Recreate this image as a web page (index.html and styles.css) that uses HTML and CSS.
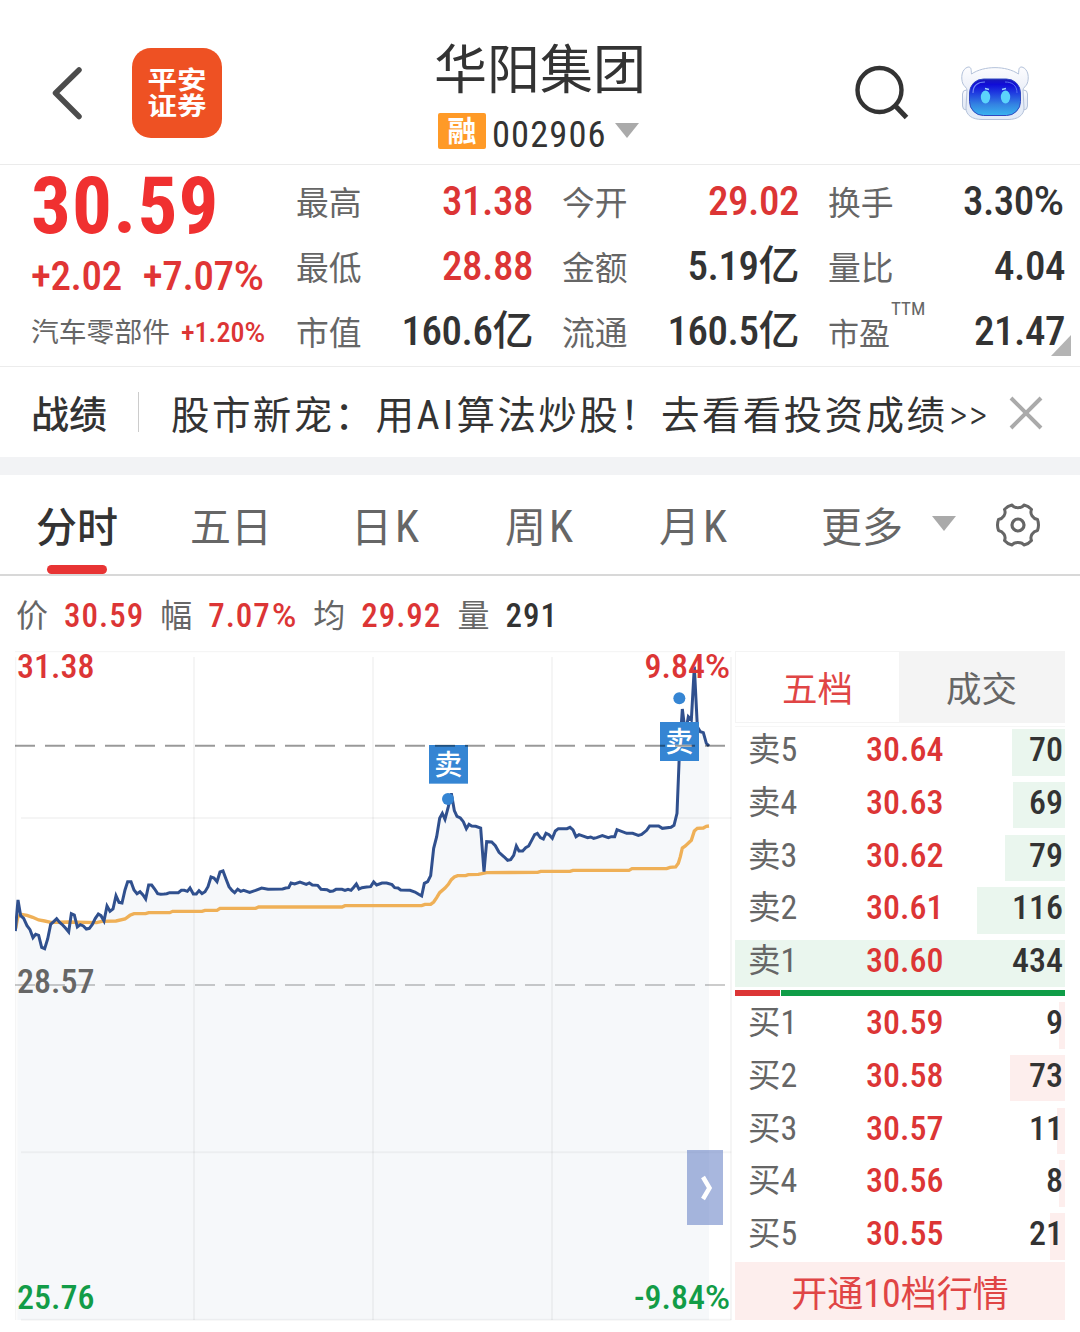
FILE: index.html
```
<!DOCTYPE html>
<html lang="zh-CN">
<head>
    <meta charset="UTF-8">
    <meta name="viewport" content="width=device-width, initial-scale=1.0">
    <title>华阳集团 002906</title>
    <link rel="stylesheet" href="styles.css">
</head>
<body>
    <header class="header">
        <svg class="back" width="36" height="60" viewBox="0 0 36 60">
            <path d="M31 7 L7.500 30 L31 53.500" fill="none" stroke="#4c4c4c" stroke-width="5.5" stroke-linecap="round" stroke-linejoin="round"/>
        </svg>
        <div class="logo"><span>平安</span><span>证券</span></div>
        <div class="title">
            <h1>华阳集团</h1>
            <div class="code">
                <span class="badge">融</span>
                <span class="code-num">002906</span>
                <i class="arrow"></i>
            </div>
        </div>
        <svg class="search" width="60" height="60" viewBox="0 0 60 60">
            <circle cx="29.500" cy="30" r="22" fill="none" stroke="#333" stroke-width="4.4"/>
            <path d="M45 45.5 L56.500 57.5" stroke="#333" stroke-width="5"/>
        </svg>
        <svg class="robot" width="70" height="58" viewBox="0 0 70 58">
            <defs>
                <linearGradient id="face" x1="0" y1="0" x2="0" y2="1">
                    <stop offset="0" stop-color="#1b1bb8"/>
                    <stop offset="0.15" stop-color="#100cd8"/>
                    <stop offset="0.4" stop-color="#2040e0"/>
                    <stop offset="0.7" stop-color="#3484e2"/>
                    <stop offset="1" stop-color="#38b4f0"/>
                </linearGradient>
                <linearGradient id="shell" x1="0" y1="0" x2="0" y2="1">
                    <stop offset="0" stop-color="#fdfdff"/>
                    <stop offset="0.5" stop-color="#e9edf7"/>
                    <stop offset="1" stop-color="#e4ecf8"/>
                </linearGradient>
            </defs>
            <g fill="url(#shell)" stroke="#b4c2da" stroke-width="1">
                <rect x="2.500" y="25" width="9" height="20" rx="4"/>
                <rect x="58.500" y="25" width="9" height="20" rx="4"/>
                <path d="M8 2 C1.500 4 .500 13 3 19 C4 21 7 23 7 25 L6 43 C6 50 12 54.500 22 54.500 L48 54.500 C58 54.500 64 50 64 43 L63 25 C63 23 66 21 67 19 C69.500 13 68.500 4 62 2 C58.500 2 59 4 58.500 9 C46 .500 24 .500 11.500 9 C11 4 11.500 2 8 2 Z"/>
            </g>
            <rect x="9.500" y="14" width="51" height="36.500" rx="14" fill="url(#face)" stroke="#3048c0" stroke-width="1"/>
            <path d="M13 28 C13 20 18 17 25 17" fill="none" stroke="#6f88f4" stroke-width="1.200"/>
            <path d="M57 28 C57 20 52 17 45 17" fill="none" stroke="#5570f0" stroke-width="1"/>
            <ellipse cx="25.500" cy="32" rx="4.700" ry="6.500" fill="#5cd4fb"/>
            <ellipse cx="45.500" cy="32" rx="4.700" ry="6.500" fill="#5cd4fb"/>
            <path d="M25 23.500 l4 1 M46 23.500 l-4 1" stroke="#9fd4fd" stroke-width="1.300"/>
        </svg>
    </header>

    <section class="quote">
        <div class="price-box">
            <div class="price">30.59</div>
            <div class="change"><span>+2.02</span><span>+7.07<i class="pct">%</i></span></div>
            <div class="sector"><span class="sector-name">汽车零部件</span><span class="sector-rate">+1.20<i class="pct">%</i></span></div>
        </div>
        <div class="stats">
            <div class="stat"><label>最高</label><b class="red">31.38</b></div>
            <div class="stat"><label>今开</label><b class="red">29.02</b></div>
            <div class="stat"><label>换手</label><b>3.30<i class="pct">%</i></b></div>
            <div class="stat"><label>最低</label><b class="red">28.88</b></div>
            <div class="stat"><label>金额</label><b>5.19亿</b></div>
            <div class="stat"><label>量比</label><b>4.04</b></div>
            <div class="stat"><label>市值</label><b>160.6亿</b></div>
            <div class="stat"><label>流通</label><b>160.5亿</b></div>
            <div class="stat"><label class="pe">市盈<sup>TTM</sup></label><b>21.47</b></div>
        </div>
        <i class="corner"></i>
    </section>

    <section class="notice">
        <strong>战绩</strong>
        <p>股市新宠：用<span class="latin">AI</span>算法炒股！去看看投资成绩<span class="more">&gt;&gt;</span></p>
        <svg class="close" width="34" height="34" viewBox="0 0 34 34">
            <path d="M2 2 L32 32 M32 2 L2 32" stroke="#aaa" stroke-width="4"/>
        </svg>
    </section>

    <nav class="tabs">
        <a class="tab active">分时</a>
        <a class="tab">五日</a>
        <a class="tab">日<span>K</span></a>
        <a class="tab">周<span>K</span></a>
        <a class="tab">月<span>K</span></a>
        <a class="tab tab-more">更多</a>
        <i class="arrow"></i>
        <svg class="gear" width="46" height="46" viewBox="0 0 46 46">
            <path d="M17 3 C19 6.500 27 6.500 29 3 Q33.500 4 36.500 7.500 C34.500 12 38 16.500 42.500 17.500 Q44.500 23 42.500 28.500 C38 29.500 34.500 34 36.500 38.500 Q33.500 42 29 43 C27 39.500 19 39.500 17 43 Q12.500 42 9.500 38.500 C11.500 34 8 29.500 3.500 28.500 Q1.500 23 3.500 17.500 C8 16.500 11.500 12 9.500 7.500 Q12.500 4 17 3 Z" fill="none" stroke="#666" stroke-width="3" stroke-linejoin="round"/>
            <circle cx="23" cy="23" r="6" fill="none" stroke="#666" stroke-width="3.200"/>
        </svg>
    </nav>

    <div class="info">
        <label>价</label><b class="red">30.59</b>
        <label>幅</label><b class="red">7.07<i class="pct">%</i></b>
        <label>均</label><b class="red">29.92</b>
        <label>量</label><b>291</b>
    </div>

    <main class="main">
        <!-- 分时图 -->
        <div class="chart">
            <svg width="717" height="670" viewBox="45 18 2151 2010">
                <polygon fill="#f6f8fa" points="52,2025 52,790 62,812 71,820 81,842 90,854 99,878 107,868 116,871 125,907 134,911 143,882 152,838 170,821 188,840 206,861 214,806 223,810 232,846 241,839 259,852 268,850 286,820 295,807 312,828 321,783 330,799 339,792 348,752 357,772 366,774 375,735 383,710 393,710 402,735 411,746 420,740 437,762 446,720 455,720 473,746 509,743 535,743 570,729 580,747 606,746 624,725 633,696 651,710 660,681 669,678 687,725 704,743 749,742 785,729 848,732 873,714 900,711 953,721 963,733 1060,728 1069,717 1112,725 1121,711 1160,714 1202,735 1230,736 1265,753 1273,715 1283,710 1292,692 1301,610 1319,520 1335,523 1354,445 1363,497 1381,519 1399,551 1407,538 1442,549 1452,680 1460,590 1475,591 1497,622 1523,646 1532,644 1549,603 1568,618 1586,603 1612,565 1630,582 1657,580 1675,551 1710,547 1728,575 1763,578 1834,575 1851,554 1915,571 1949,543 2013,547 2022,541 2031,505 2038,330 2047,192 2056,265 2074,225 2083,65 2092,245 2110,263 2127,303 2127,2025"/>
                <g stroke="#000" stroke-opacity="0.04" stroke-width="6">
                    <path d="M45 20 H2194" stroke-width="4"/>
                    <path d="M63 519 H2194 M63 1522 H2194 M63 2024 H2194"/>
                    <path d="M47 36 V2025" stroke-width="4"/>
                    <path d="M582 36 V2025 M1119 36 V2025 M1656 36 V2025 M2193 36 V2025"/>
                </g>
                <polyline class="avg" points="47,850 53,818 62,808 81,811 98,817 116,825 134,828 152,832 206,831 290,833 305,829 348,828 375,822 390,811 402,806 437,806 446,803 509,803 518,799 606,799 615,796 651,796 660,790 767,790 776,786 1026,786 1035,782 1265,782 1275,778 1292,778 1301,771 1310,758 1319,743 1335,729 1345,718 1354,704 1363,696 1373,692 1397,692 1405,689 1435,688 1460,683 1613,682 1622,679 1710,679 1719,676 1887,676 1896,671 2000,671 2010,667 2027,666 2035,655 2041,635 2047,609 2056,603 2074,586 2083,558 2092,550 2110,549 2119,544 2127,543"/>
                <polyline class="line" points="46,858 54,765 62,812 71,820 81,842 90,854 99,878 107,868 116,871 125,907 134,911 143,882 152,838 161,830 170,821 179,832 188,840 197,850 206,861 214,806 223,810 232,846 241,839 250,843 259,852 268,850 277,838 286,820 295,807 303,812 312,828 321,783 330,799 339,792 348,752 357,772 366,774 375,735 383,710 393,710 402,735 411,746 420,740 429,750 437,762 446,720 455,720 464,732 473,746 482,748 492,747 500,746 509,743 535,743 544,736 553,736 562,739 570,729 580,747 589,747 597,737 606,746 615,740 624,725 633,696 642,699 651,710 660,681 669,678 678,702 687,725 696,736 704,743 713,733 722,739 731,736 749,742 767,736 785,729 804,733 848,732 857,729 866,728 873,714 884,717 900,711 919,718 928,714 937,720 953,721 963,733 981,734 990,739 999,738 1008,733 1026,733 1035,736 1044,733 1053,736 1060,728 1069,717 1077,732 1086,728 1100,726 1112,725 1121,711 1130,720 1146,714 1160,714 1176,719 1184,728 1194,729 1202,735 1230,736 1245,741 1256,748 1265,753 1273,715 1283,710 1292,692 1301,610 1310,575 1319,520 1327,505 1335,523 1345,485 1354,445 1363,497 1371,514 1381,519 1390,530 1399,551 1407,538 1415,543 1427,544 1442,549 1452,680 1460,590 1475,591 1486,602 1497,622 1513,636 1523,646 1532,644 1541,631 1549,603 1557,618 1568,618 1577,608 1586,603 1595,586 1604,569 1612,565 1621,578 1630,582 1638,565 1647,569 1657,580 1666,558 1675,551 1701,551 1710,547 1719,555 1728,575 1737,569 1763,578 1772,576 1781,580 1790,578 1807,572 1825,578 1834,575 1844,575 1851,554 1880,565 1898,565 1915,571 1925,568 1940,556 1949,543 1976,543 1987,550 2013,547 2022,541 2031,505 2038,330 2047,192 2056,265 2065,215 2074,225 2083,65 2092,245 2101,260 2110,263 2119,295 2127,303"/>
                <g fill="#3585d3">
                    <rect x="1287" y="300" width="117" height="116"/>
                    <circle cx="1344" cy="462" r="18"/>
                    <rect x="1980" y="231" width="117" height="117"/>
                    <circle cx="2038" cy="160" r="18"/>
                </g>
                <g class="mark">
                    <text x="1345" y="391">卖</text>
                    <text x="2038" y="322">卖</text>
                </g>
                <path d="M45 302 H2175" stroke="#000" stroke-opacity="0.4" stroke-width="6" stroke-dasharray="60 30"/>
                <path d="M45 1020 H2175" stroke="#000" stroke-opacity="0.2" stroke-width="6" stroke-dasharray="60 30"/>
            </svg>
            <span class="axis top-left red">31.38</span>
            <span class="axis top-right red">9.84<i class="pct">%</i></span>
            <span class="axis mid-left">28.57</span>
            <span class="axis bottom-left green">25.76</span>
            <span class="axis bottom-right green">-9.84<i class="pct">%</i></span>
            <div class="expand">
                <svg width="14" height="28" viewBox="0 0 14 28">
                    <path d="M3 3 L9.500 14 L3 25" fill="none" stroke="#fff" stroke-width="4.500"/>
                </svg>
            </div>
        </div>

        <!-- 五档盘口 -->
        <div class="book">
            <div class="book-tabs"><span class="on">五档</span><span>成交</span></div>
            <div class="levels sell">
                <div class="level"><i class="bar" style="width: 53px"></i><label>卖<em>5</em></label><b class="red">30.64</b><b>70</b></div>
                <div class="level"><i class="bar" style="width: 52px"></i><label>卖<em>4</em></label><b class="red">30.63</b><b>69</b></div>
                <div class="level"><i class="bar" style="width: 60px"></i><label>卖<em>3</em></label><b class="red">30.62</b><b>79</b></div>
                <div class="level"><i class="bar" style="width: 88px"></i><label>卖<em>2</em></label><b class="red">30.61</b><b>116</b></div>
                <div class="level"><i class="bar" style="width: 330px"></i><label>卖<em>1</em></label><b class="red">30.60</b><b>434</b></div>
            </div>
            <div class="ratio"><i class="ratio-buy" style="width: 45px"></i><i class="ratio-sell"></i></div>
            <div class="levels buy">
                <div class="level"><i class="bar" style="width: 6px"></i><label>买<em>1</em></label><b class="red">30.59</b><b>9</b></div>
                <div class="level"><i class="bar" style="width: 55px"></i><label>买<em>2</em></label><b class="red">30.58</b><b>73</b></div>
                <div class="level"><i class="bar" style="width: 8px"></i><label>买<em>3</em></label><b class="red">30.57</b><b>11</b></div>
                <div class="level"><i class="bar" style="width: 6px"></i><label>买<em>4</em></label><b class="red">30.56</b><b>8</b></div>
                <div class="level"><i class="bar" style="width: 15px"></i><label>买<em>5</em></label><b class="red">30.55</b><b>21</b></div>
            </div>
            <button class="open">开通<em>10</em>档行情</button>
        </div>
    </main>
</body>
</html>
```
FILE: styles.css
```
* {
    box-sizing: border-box;
}
body {
    margin: 0;
    width: 1080px;
    height: 1332px;
    overflow: hidden;
    background-color: #fff;
    color: #333;
    font-family: Roboto, "Noto Sans CJK SC", sans-serif;
    font-stretch: 75%;
}
b {
    font-weight: 500;
}
em, i {
    font-style: normal;
}
svg {
    display: block;
}
.red {
    color: #dc3535;
}
.green {
    color: #129c47;
}
.pct {
    font-stretch: 100%;
    letter-spacing: 0;
}
.arrow {
    border: 12px solid transparent;
    border-top: 15px solid #aaa;
    border-bottom: 0;
}

/* 顶部 */
.header {
    display: flex;
    height: 165px;
    border-bottom: 1px solid #ebebeb;
}
.back {
    margin: 63px 0 0 48px;
}
.logo {
    display: flex;
    flex-direction: column;
    align-items: center;
    width: 90px;
    height: 90px;
    margin: 48px 0 0 48px;
    padding-top: 20px;
    border-radius: 19px;
    background-color: #ee5123;
    color: #fff;
    font-size: 25px;
    font-weight: 700;
    line-height: 26px;
}
.logo span {
    transform: scaleX(1.18);
}
.title {
    width: 220px;
    margin: 36px 0 0 212px;
}
.title h1 {
    margin: 0 0 7px;
    font-size: 53px;
    font-weight: 400;
    line-height: 70px;
    white-space: nowrap;
}
.code {
    display: flex;
    margin-left: 4px;
}
.badge {
    width: 48px;
    height: 36px;
    border-radius: 2px;
    background-color: #ff9a27;
    color: #fff;
    font-size: 29px;
    font-weight: 600;
    line-height: 38px;
    text-align: center;
}
.code-num {
    width: 124px;
    margin-left: 6px;
    font-size: 36.5px;
    font-weight: 400;
    line-height: 43px;
    letter-spacing: 1.1px;
}
.code .arrow {
    height: 15px;
    margin: 10px 0 0 -1px;
}
.search {
    margin: 60px 0 0 196px;
}
.robot {
    margin: 65px 0 0 50px;
}

/* 行情 */
.quote {
    position: relative;
    display: flex;
    height: 202px;
    border-bottom: 1px solid #ececec;
}
.price-box {
    width: 297px;
    padding: 0 0 0 31px;
}
.price {
    margin-top: 2px;
    color: #f03030;
    font-size: 79px;
    font-weight: 700;
    line-height: 78px;
    letter-spacing: 1.2px;
}
.change {
    display: flex;
    gap: 21px;
    margin-top: 6px;
    color: #e03535;
    font-size: 41px;
    font-weight: 500;
    line-height: 50px;
    letter-spacing: -0.4px;
}
.sector {
    display: flex;
    gap: 11px;
    line-height: 40px;
    margin-top: 12px;
}
.sector-name {
    color: #666;
    font-size: 27.8px;
}
.sector-rate {
    color: #dc3535;
    font-size: 28px;
    font-weight: 500;
}
.stats {
    display: grid;
    grid-template-columns: 236px 236px 236px;
    column-gap: 30px;
    grid-auto-rows: 65px;
    padding-top: 4px;
}
.stat {
    display: flex;
    justify-content: space-between;
    line-height: 65px;
    white-space: nowrap;
}
.stat label {
    padding-top: 3px;
    margin-left: -1px;
    color: #666;
    font-size: 32.8px;
}
.stat b {
    font-size: 41px;
    letter-spacing: -0.5px;
}
.stat .pct {
    margin-right: 1px;
}
.stat .pe {
    position: relative;
    font-size: 31px;
}
.pe sup {
    position: absolute;
    top: -23px;
    left: 63px;
    font-size: 19px;
    font-weight: 400;
    line-height: 65px;
}
.corner {
    position: absolute;
    right: 9px;
    bottom: 10px;
    border-left: 20px solid transparent;
    border-bottom: 21px solid #b4b4b4;
}

/* 公告 */
.notice {
    display: flex;
    align-items: center;
    height: 108px;
    padding-left: 31px;
    border-bottom: 18px solid #f2f3f5;
}
.notice strong {
    width: 108px;
    height: 40px;
    border-right: 1px solid #ccc;
    font-size: 38px;
    font-weight: 500;
    line-height: 47px;
}
.notice p {
    width: 840px;
    margin: 7px 0 0 32px;
    font-size: 38.5px;
    letter-spacing: 2.4px;
    line-height: 60px;
    white-space: nowrap;
}
.latin {
    font-size: 40px;
    font-weight: 400;
    letter-spacing: 3.5px;
}
.more {
    margin-left: 2px;
    font-size: 40px;
    font-weight: 300;
    letter-spacing: 1.5px;
}
.close {
    margin-left: -2px;
    margin-top: 2px;
}

/* 周期切换 */
.tabs {
    display: flex;
    height: 101px;
    border-bottom: 2px solid #d8d8d8;
    line-height: 107px;
}
.tab {
    width: 154px;
    color: #666;
    font-size: 41px;
    text-align: center;
    white-space: nowrap;
}
.tab span {
    font-size: 44px;
    font-weight: 400;
    font-stretch: 75%;
    margin-left: 3px;
    line-height: 99px;
}
.tab.active {
    position: relative;
    color: #333;
    font-weight: 500;
}
.tab.active::after {
    content: "";
    position: absolute;
    left: 47px;
    bottom: 0;
    width: 60px;
    height: 9px;
    border-radius: 5px;
    background-color: #e83434;
}
.tab-more {
    width: 92px;
    margin-left: 46px;
}
.tabs .arrow {
    height: 15px;
    margin: 41px 0 0 24px;
}
.gear {
    margin: 27px 0 0 39px;
}

/* 光标数据 */
.info {
    display: flex;
    height: 75px;
    padding-left: 16px;
    line-height: 81px;
}
.info label {
    width: 48px;
    color: #666;
    font-size: 32px;
}
.info b {
    margin-right: 16px;
    font-size: 33px;
    letter-spacing: 1px;
    line-height: 80px;
}
.info .pct {
    margin: 0 1px;
}

.main {
    display: flex;
    padding-left: 15px;
}
.chart {
    position: relative;
    width: 720px;
    height: 670px;
}
.line, .avg {
    fill: none;
    stroke: #30508e;
    stroke-width: 9;
    stroke-linejoin: miter;
}
.avg {
    stroke: #efb057;
    stroke-width: 10;
}
.mark {
    fill: #fff;
    font-size: 84px;
    font-weight: 500;
    text-anchor: middle;
}
.axis {
    position: absolute;
    color: #666;
    font-size: 34px;
    font-weight: 500;
    line-height: 34px;
}
.axis.red {
    color: #dc3535;
}
.axis.green {
    color: #129c47;
}
.top-left {
    top: -2px;
    left: 2px;
}
.top-right {
    top: -2px;
    right: 5px;
}
.mid-left {
    top: 313px;
    left: 2px;
}
.bottom-left {
    bottom: 7px;
    left: 2px;
}
.bottom-right {
    right: 5px;
    bottom: 7px;
}
.expand {
    position: absolute;
    top: 499px;
    left: 672px;
    width: 36px;
    height: 75px;
    padding: 24px 0 0 13px;
    background-color: rgba(96, 124, 194, 0.55);
}

/* 盘口 */
.book {
    width: 330px;
}
.book-tabs {
    display: flex;
    height: 72px;
    margin-bottom: 3px;
    border: 1px solid #f4f4f4;
    line-height: 76px;
}
.book-tabs span {
    width: 165px;
    background-color: #f4f4f4;
    color: #666;
    font-size: 35.5px;
    text-align: center;
}
.book-tabs .on {
    width: 163px;
    background-color: #fff;
    color: #e04545;
}
.levels {
    padding-top: 2px;
    border: 1px solid #f6f6f6;
    border-width: 1px 0 0;
}
.level {
    position: relative;
    display: flex;
    height: 52.8px;
    padding: 0 2px 0 13px;
    line-height: 41px;
}
.level label {
    position: relative;
    width: 118px;
    color: #666;
    font-size: 32.5px;
}
.level em {
    font-size: 34px;
    font-weight: 400;
}
.level b {
    position: relative;
    font-size: 34px;
}
.level b:last-child {
    margin-left: auto;
}
.bar {
    position: absolute;
    top: 0;
    right: 0;
    height: 46.6px;
}
.sell .bar {
    background-color: #eaf6ee;
}
.buy .bar {
    background-color: #fdeeed;
}
.sell {
    height: 264px;
}
.ratio {
    display: flex;
    gap: 1px;
    height: 6px;
}
.ratio-buy {
    background-color: #dc3535;
}
.ratio-sell {
    flex: 1;
    background-color: #0f9d47;
}
.buy {
    height: 266px;
    padding-top: 6px;
    border: 0;
}
.open {
    display: block;
    width: 330px;
    height: 58px;
    padding: 0;
    border: 0;
    background-color: #fdeeed;
    color: #e04545;
    font-family: inherit;
    font-size: 36px;
    font-stretch: 75%;
    line-height: 65px;
}
.open em {
    font-size: 38px;
    font-weight: 400;
}
```
